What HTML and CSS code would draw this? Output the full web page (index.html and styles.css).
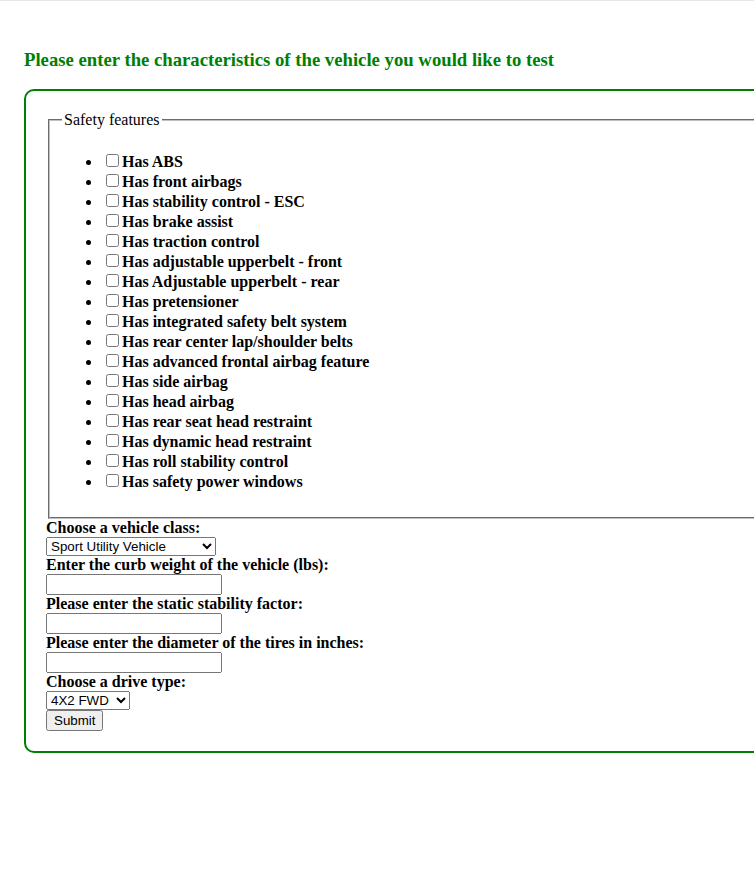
FILE: index.html
```html
<!DOCTYPE html>
<html>
<head>
<meta charset="utf-8">
<title>Vehicle test</title>
<link rel="stylesheet" href="styles.css">
</head>
<body>
<div class="page">
  <h3 class="title">Please enter the characteristics of the vehicle you would like to test</h3>
  <form class="vehicle-form">
    <fieldset class="safety">
      <legend>Safety features</legend>
      <ul class="features">
        <li><input type="checkbox"><label>Has ABS</label></li>
        <li><input type="checkbox"><label>Has front airbags</label></li>
        <li><input type="checkbox"><label>Has stability control - ESC</label></li>
        <li><input type="checkbox"><label>Has brake assist</label></li>
        <li><input type="checkbox"><label>Has traction control</label></li>
        <li><input type="checkbox"><label>Has adjustable upperbelt - front</label></li>
        <li><input type="checkbox"><label>Has Adjustable upperbelt - rear</label></li>
        <li><input type="checkbox"><label>Has pretensioner</label></li>
        <li><input type="checkbox"><label>Has integrated safety belt system</label></li>
        <li><input type="checkbox"><label>Has rear center lap/shoulder belts</label></li>
        <li><input type="checkbox"><label>Has advanced frontal airbag feature</label></li>
        <li><input type="checkbox"><label>Has side airbag</label></li>
        <li><input type="checkbox"><label>Has head airbag</label></li>
        <li><input type="checkbox"><label>Has rear seat head restraint</label></li>
        <li><input type="checkbox"><label>Has dynamic head restraint</label></li>
        <li><input type="checkbox"><label>Has roll stability control</label></li>
        <li><input type="checkbox"><label>Has safety power windows</label></li>
      </ul>
    </fieldset>
    <label class="field-label">Choose a vehicle class:</label><br>
    <select class="class-select">
      <option>Sport Utility Vehicle</option>
      <option>Passenger Car</option>
      <option>Pickup Truck</option>
      <option>Van</option>
    </select><br>
    <label class="field-label">Enter the curb weight of the vehicle (lbs):</label><br>
    <input type="text" class="text-field"><br>
    <label class="field-label">Please enter the static stability factor:</label><br>
    <input type="text" class="text-field"><br>
    <label class="field-label">Please enter the diameter of the tires in inches:</label><br>
    <input type="text" class="text-field"><br>
    <label class="field-label">Choose a drive type:</label><br>
    <select class="drive-select">
      <option>4X2 FWD</option>
      <option>4X2 RWD</option>
      <option>4X4</option>
      <option>AWD</option>
    </select><br>
    <input type="submit" value="Submit" class="submit-btn">
  </form>
</div>
</body>
</html>
```

FILE: styles.css
```css
html {
  border-top: 1px solid #e5e7eb;
}
body {
  margin: 8px 0 8px 8px;
  font-family: "Liberation Serif", "Times New Roman", serif;
  font-size: 16px;
}
.page {
  padding: 16px 0 16px 16px;
  overflow: hidden;
}
.title {
  color: #008000;
  font-size: 18.72px;
  font-weight: bold;
  margin: 24px 0 18px;
  white-space: nowrap;
}
.vehicle-form {
  border: 2px solid #008000;
  border-radius: 10px;
  padding: 20px;
  width: 800px;
}
.safety {
  margin: 0 2px;
  border: 2px groove #c0c0c0;
  padding: 0.35em 0.75em 0.625em;
}
.safety legend {
  padding: 0 2px;
}
.features {
  margin: 16px 0;
  padding-left: 40px;
}
.features li label {
  font-weight: bold;
}
.field-label {
  font-weight: bold;
}
.class-select,
.drive-select,
.text-field,
.submit-btn {
  font-family: "Liberation Sans", Arial, sans-serif;
  font-size: 13.33px;
}
.class-select {
  width: 170px;
}
.drive-select {
  width: 84px;
}
.text-field {
  width: 168px;
}
```
